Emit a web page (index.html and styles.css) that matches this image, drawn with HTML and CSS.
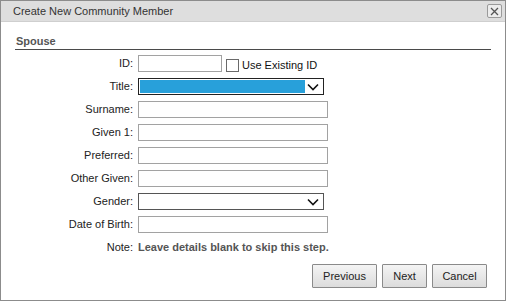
FILE: index.html
```html
<!DOCTYPE html>
<html>
<head>
<meta charset="utf-8">
<link rel="stylesheet" href="styles.css">
</head>
<body>
<div class="dialog">
  <div class="titlebar">
    <span class="title">Create New Community Member</span>
    <span class="close"><svg width="9" height="9" viewBox="0 0 9 9"><path d="M1 1L8 8M8 1L1 8" stroke="#555" stroke-width="1.3" fill="none"/></svg></span>
  </div>
  <div class="content">
    <div class="section">Spouse</div>
    <div class="form">
      <label class="lbl">ID:</label>
      <div class="field"><span class="input short"></span><span class="check"></span><span class="checklbl">Use Existing ID</span></div>
      <label class="lbl">Title:</label>
      <div class="field"><span class="select focused"><span class="sel-fill"></span><svg class="chev" width="12" height="8" viewBox="0 0 12 8"><path d="M1 1.5L6 6.5L11 1.5" stroke="#111" stroke-width="1.6" fill="none"/></svg></span></div>
      <label class="lbl">Surname:</label>
      <div class="field"><span class="input"></span></div>
      <label class="lbl">Given 1:</label>
      <div class="field"><span class="input"></span></div>
      <label class="lbl">Preferred:</label>
      <div class="field"><span class="input"></span></div>
      <label class="lbl">Other Given:</label>
      <div class="field"><span class="input"></span></div>
      <label class="lbl">Gender:</label>
      <div class="field"><span class="select"><span class="sel-empty"></span><svg class="chev" width="12" height="8" viewBox="0 0 12 8"><path d="M1 1.5L6 6.5L11 1.5" stroke="#111" stroke-width="1.6" fill="none"/></svg></span></div>
      <label class="lbl">Date of Birth:</label>
      <div class="field"><span class="input"></span></div>
      <label class="lbl">Note:</label>
      <div class="field note">Leave details blank to skip this step.</div>
    </div>
    <div class="buttons">
      <button class="btn prev">Previous</button>
      <button class="btn next">Next</button>
      <button class="btn cancel">Cancel</button>
    </div>
  </div>
</div>
</body>
</html>
```
FILE: styles.css
```css
html, body {
  margin: 0;
  padding: 0;
  background: #ffffff;
}
body {
  font-family: "Liberation Sans", Arial, sans-serif;
  font-size: 11px;
  color: #222;
}
.dialog {
  width: 506px;
  height: 301px;
  box-sizing: border-box;
  border: 1px solid #8c8c8c;
  background: #fff;
  display: flex;
  flex-direction: column;
}
.titlebar {
  height: 20px;
  background: #dedede;
  border-bottom: 1px solid #cfcfcf;
  display: flex;
  align-items: center;
  justify-content: space-between;
  padding: 0 3px 0 12px;
}
.title {
  color: #333;
  font-size: 11px;
  line-height: 20px;
}
.close {
  width: 13px;
  height: 12px;
  border: 1px solid #9a9a9a;
  border-radius: 2px;
  background: #ececec;
  display: flex;
  align-items: center;
  justify-content: center;
}
.content {
  flex: 1;
  padding: 0 14px 0 14px;
  display: flex;
  flex-direction: column;
}
.section {
  margin-top: 12px;
  font-weight: bold;
  color: #555;
  padding-left: 1px;
  height: 14px;
  line-height: 14px;
  padding-bottom: 1px;
  border-bottom: 1px solid #4a4a4a;
}
.form {
  margin-top: 5px;
  display: grid;
  grid-template-columns: 118px 1fr;
  column-gap: 5px;
  row-gap: 6px;
}
.lbl {
  text-align: right;
  line-height: 17px;
  height: 17px;
  color: #222;
}
.field {
  display: flex;
  align-items: center;
  height: 17px;
}
.input {
  display: block;
  width: 188px;
  height: 15px;
  border: 1px solid #a2a2a2;
  background: #fff;
}
.input.short {
  width: 82px;
}
.check {
  display: block;
  width: 11px;
  height: 11px;
  border: 1px solid #6a6a6a;
  margin-left: 4px;
  margin-top: 3px;
  background: #fff;
}
.checklbl {
  margin-left: 3px;
  color: #111;
  line-height: 17px;
  padding-top: 3px;
}
.select {
  display: flex;
  align-items: center;
  width: 184px;
  height: 15px;
  border: 1px solid #555;
  background: #fff;
}
.select.focused {
  border-color: #222;
}
.sel-fill {
  display: block;
  width: 165px;
  height: 13px;
  margin-left: 1px;
  background: #28a0da;
}
.sel-empty {
  display: block;
  width: 166px;
  height: 13px;
}
.chev {
  margin-left: 2px;
}
.note {
  font-weight: bold;
  color: #555;
  line-height: 17px;
}
.buttons {
  margin-top: 8px;
  display: flex;
  justify-content: flex-end;
  gap: 5px;
  padding-right: 4px;
}
.btn {
  height: 24px;
  box-sizing: border-box;
  border: 1px solid #8a8a8a;
  border-radius: 1px;
  background: linear-gradient(#f4f4f4, #dcdcdc);
  font-family: "Liberation Sans", Arial, sans-serif;
  font-size: 11px;
  color: #222;
  padding: 0;
  margin: 0;
}
.prev { width: 65px; }
.next { width: 45px; }
.cancel { width: 55px; }
```
